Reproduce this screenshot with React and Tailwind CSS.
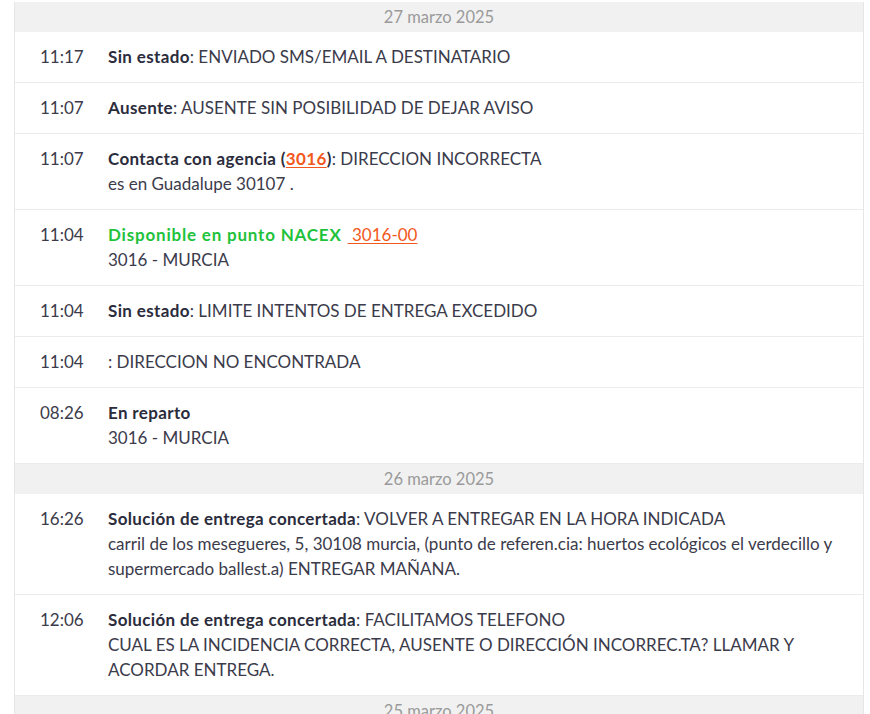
import React from "react";

const DAYS = [
  {
    date: "27 marzo 2025",
    events: [
      { time: "11:17", title: "Sin estado", text: "ENVIADO SMS/EMAIL A DESTINATARIO" },
      { time: "11:07", title: "Ausente", text: "AUSENTE SIN POSIBILIDAD DE DEJAR AVISO" },
      {
        time: "11:07",
        title: "Contacta con agencia",
        agency: "3016",
        text: "DIRECCION INCORRECTA",
        detail: "es en Guadalupe 30107 .",
      },
      { time: "11:04", point: "Disponible en punto NACEX", code: "3016-00", detail: "3016 - MURCIA" },
      { time: "11:04", title: "Sin estado", text: "LIMITE INTENTOS DE ENTREGA EXCEDIDO" },
      { time: "11:04", title: "", text: "DIRECCION NO ENCONTRADA" },
      { time: "08:26", title: "En reparto", detail: "3016 - MURCIA" },
    ],
  },
  {
    date: "26 marzo 2025",
    events: [
      {
        time: "16:26",
        title: "Solución de entrega concertada",
        text: "VOLVER A ENTREGAR EN LA HORA INDICADA",
        detail:
          "carril de los mesegueres, 5, 30108 murcia, (punto de referen.cia: huertos ecológicos el verdecillo y supermercado ballest.a) ENTREGAR MAÑANA.",
      },
      {
        time: "12:06",
        title: "Solución de entrega concertada",
        text: "FACILITAMOS TELEFONO",
        detail: "CUAL ES LA INCIDENCIA CORRECTA, AUSENTE O DIRECCIÓN INCORREC.TA? LLAMAR Y ACORDAR ENTREGA.",
      },
    ],
  },
  { date: "25 marzo 2025", events: [] },
];

function EventRow({ ev }) {
  return (
    <div className="flex border-b border-[#ececec] pl-[25px] pr-4 pt-3 pb-[13px]">
      <div className="w-[68px] shrink-0 text-[#3b3b4b]">{ev.time}</div>
      <div className="flex-1 text-[#3b3b4b]">
        {ev.point ? (
          <div>
            <span className="font-bold tracking-[0.8px] text-[#1fc23b]">{ev.point}</span>
            <span className="ml-[6px] text-[#f2581c] underline underline-offset-2">&nbsp;{ev.code}</span>
          </div>
        ) : (
          <div>
            {ev.title && <span className="font-bold tracking-[0.35px] text-[#2b2c3c]">{ev.title}</span>}
            {ev.agency && (
              <span className="font-bold tracking-[0.35px] text-[#2b2c3c]">
                {" ("}
                <span className="text-[#f2581c] underline underline-offset-2">{ev.agency}</span>)
              </span>
            )}
            {ev.text !== undefined && <span>: {ev.text}</span>}
          </div>
        )}
        {ev.detail && <div>{ev.detail}</div>}
      </div>
    </div>
  );
}

export default function App() {
  return (
    <div className="min-h-screen bg-white pt-[2px] font-['Lato','Liberation_Sans',sans-serif] text-[17px] leading-[25px]">
      <div className="ml-[14px] w-[850px] border-x border-[#e6e6e6]">
        {DAYS.map((day) => (
          <div key={day.date}>
            <div className="h-[30px] bg-[#f1f1f1] text-center text-[16.5px] leading-[30px] text-[#9a9a9a]">
              {day.date}
            </div>
            {day.events.map((ev, i) => (
              <EventRow key={i} ev={ev} />
            ))}
          </div>
        ))}
      </div>
    </div>
  );
}
